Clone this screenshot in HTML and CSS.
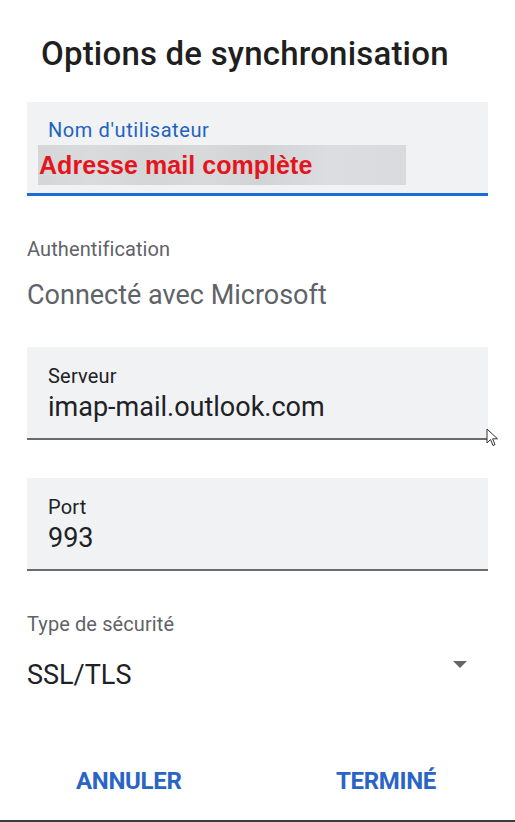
FILE: index.html
```html
<!DOCTYPE html>
<html>
<head>
  <meta charset="UTF-8" />
  <title>Options de synchronisation</title>
  <link rel="stylesheet" href="styles.css">
</head>
<body>
  <div class="dialog">
    <h1 class="title">Options de synchronisation</h1>

    <div class="field active">
      <div class="field-label">Nom d'utilisateur</div>
      <div class="masked">
        <span class="masked-text">Adresse mail complète</span>
      </div>
    </div>

    <div class="static">
      <div class="static-label">Authentification</div>
      <div class="static-value">Connecté avec Microsoft</div>
    </div>

    <div class="field server">
      <div class="field-label">Serveur</div>
      <div class="field-value">imap-mail.outlook.com</div>
      <!-- mouse pointer from the screenshot -->
      <svg class="pointer" width="14" height="20" viewBox="0 0 14 20">
        <path d="M1 1 L1 15 L4.5 11.5 L7 17.5 L9 16.6 L6.6 10.8 L11.5 10.8 Z" fill="#fff" stroke="#333" stroke-width="1" stroke-linejoin="round" />
      </svg>
    </div>

    <div class="field port">
      <div class="field-label">Port</div>
      <div class="field-value">993</div>
    </div>

    <div class="select">
      <div class="static-label">Type de sécurité</div>
      <div class="select-row">
        <span class="select-value">SSL/TLS</span>
        <span class="caret"></span>
      </div>
    </div>

    <div class="actions">
      <button class="action">ANNULER</button>
      <button class="action">TERMINÉ</button>
    </div>
  </div>
</body>
</html>
```

FILE: styles.css
```css
* {
  box-sizing: border-box;
}

body {
  margin: 0;
  background-color: #fff;
  font-family: Roboto, "Noto Sans", Arial, sans-serif;
  color: #202124;
}

.dialog {
  height: 822px;
  padding: 0 27px;
  border-bottom: 2px solid #3c3c3c;
  overflow: hidden;
}

.title {
  margin: 0;
  padding: 34px 0 0 14px;
  font-size: 33px;
  font-weight: 500;
  line-height: 40px;
  letter-spacing: 0.2px;
  color: #1f1f1f;
}

/* Filled text fields */
.field {
  position: relative;
  height: 93px;
  padding: 17px 21px 0 21px;
  background-color: #f1f2f4;
  border-bottom: 2px solid #6b6b6b;
}

.field.active {
  margin-top: 28px;
  height: 94px;
  padding-top: 16px;
  border-bottom: 3px solid #1a6ad8;
}

.field-label {
  font-size: 20px;
  line-height: 24px;
  letter-spacing: 0.2px;
  color: #202124;
}

.active .field-label {
  letter-spacing: 0.6px;
  color: #1e63bf;
}

.field-value {
  margin-top: 3px;
  font-size: 27px;
  line-height: 32px;
  color: #202124;
}

.masked {
  margin: 3px 0 0 -10px;
  width: 368px;
  height: 40px;
  padding: 1px 0 0 1px;
  background: linear-gradient(90deg, #d5d6d8 0%, #dadbdd 15%, #d4d5d7 30%, #d8d9db 45%, #d2d3d5 60%, #dcdde0 80%, #d9dadc 100%);
}

.masked-text {
  font-family: "Liberation Sans", Arial, sans-serif;
  font-weight: bold;
  font-size: 25px;
  line-height: 38px;
  letter-spacing: 0.05px;
  color: #e3151d;
}

/* Read-only rows */
.static {
  margin-top: 41px;
}

.static-label {
  font-size: 20px;
  line-height: 24px;
  letter-spacing: 0.1px;
  color: #5f6368;
}

.static-value {
  margin-top: 18px;
  font-size: 27px;
  line-height: 32px;
  color: #5f6368;
}

.server {
  margin-top: 36px;
}

.port {
  margin-top: 38px;
}

.pointer {
  position: absolute;
  right: -12px;
  bottom: -10px;
}

/* Security type select */
.select {
  margin-top: 41px;
}

.select-row {
  display: flex;
  align-items: center;
  justify-content: space-between;
  margin-top: 23px;
  padding-right: 21px;
}

.select-value {
  font-size: 27px;
  line-height: 32px;
  color: #202124;
}

.caret {
  width: 0;
  height: 0;
  margin-top: -22px;
  border-left: 7px solid transparent;
  border-right: 7px solid transparent;
  border-top: 7px solid #666;
}

/* Dialog buttons */
.actions {
  display: flex;
  justify-content: space-between;
  margin-top: 76px;
  padding: 0 52px 0 49px;
}

.action {
  padding: 0;
  border: none;
  background: none;
  font-family: Roboto, Arial, sans-serif;
  font-size: 24px;
  font-weight: bold;
  line-height: 28px;
  letter-spacing: -0.3px;
  color: #2a64c6;
  cursor: pointer;
}
```
